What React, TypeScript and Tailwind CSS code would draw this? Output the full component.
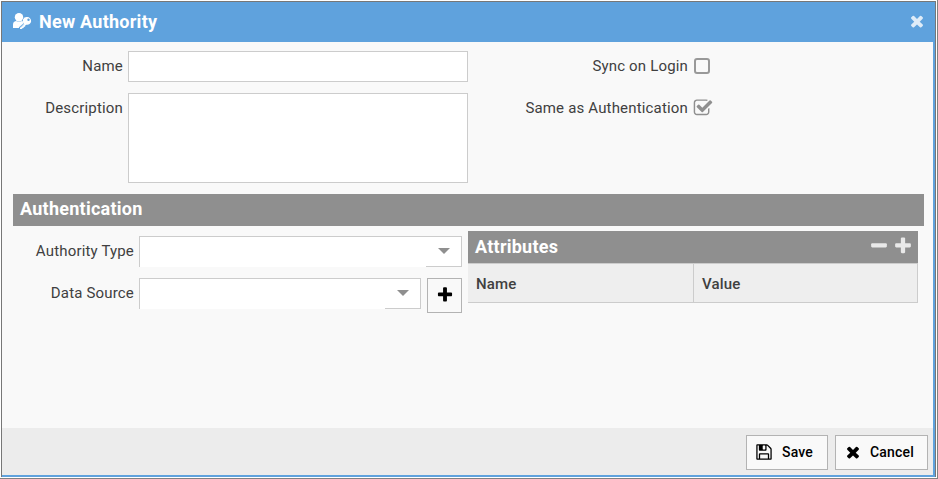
import React from "react";

const paths = {
  times: "M1490 1322q0 40-28 68l-136 136q-28 28-68 28t-68-28l-294-294-294 294q-28 28-68 28t-68-28l-136-136q-28-28-28-68t28-68l294-294-294-294q-28-28-28-68t28-68l136-136q28-28 68-28t68 28l294 294 294-294q28-28 68-28t68 28l136 136q28 28 28 68t-28 68l-294 294 294 294q28 28 28 68z",
  plus: "M1600 736v192q0 40-28 68t-68 28h-416v416q0 40-28 68t-68 28h-192q-40 0-68-28t-28-68v-416h-416q-40 0-68-28t-28-68v-192q0-40 28-68t68-28h416v-416q0-40 28-68t68-28h192q40 0 68 28t28 68v416h416q40 0 68 28t28 68z",
  minus: "M1600 736v192q0 40-28 68t-68 28h-1216q-40 0-68-28t-28-68v-192q0-40 28-68t68-28h1216q40 0 68 28t28 68z",
  save: "M512 1536h768v-384h-768v384zm896 0h128v-896q0-14-10-38.5t-20-34.5l-281-281q-10-10-34-20t-39-10v416q0 40-28 68t-68 28h-576q-40 0-68-28t-28-68v-416h-128v1280h128v-416q0-40 28-68t68-28h832q40 0 68 28t28 68v416zm-384-928v-320q0-13-9.5-22.5t-22.5-9.5h-192q-13 0-22.5 9.5t-9.5 22.5v320q0 13 9.5 22.5t22.5 9.5h192q13 0 22.5-9.5t9.5-22.5zm640 32v928q0 40-28 68t-68 28h-1344q-40 0-68-28t-28-68v-1344q0-40 28-68t68-28h928q40 0 88 20t76 48l280 280q28 28 48 76t20 88z",
  check: "M1472 930v318q0 119-84.5 203.5t-203.5 84.5h-832q-119 0-203.5-84.5t-84.5-203.5v-832q0-119 84.5-203.5t203.5-84.5h832q63 0 117 25 15 7 18 23 3 17-9 29l-49 49q-10 10-23 10-3 0-9-2-23-6-45-6h-832q-66 0-113 47t-47 113v832q0 66 47 113t113 47h832q66 0 113-47t47-113v-254q0-13 9-22l64-64q10-10 23-10 6 0 12 3 20 8 20 29zm231-489l-814 814q-24 24-57 24t-57-24l-430-430q-24-24-24-57t24-57l110-110q24-24 57-24t57 24l263 263 647-647q24-24 57-24t57 24l110 110q24 24 24 57t-24 57z",
};

function Icon({ name, className }: { name: keyof typeof paths; className: string }) {
  return (
    <svg viewBox="0 0 1792 1792" fill="currentColor" className={className}>
      <path d={paths[name]} />
    </svg>
  );
}

function UserKey() {
  return (
    <svg viewBox="0 0 20 18" className="mb-px h-[18px] w-5 shrink-0" fill="#fff">
      <circle cx="7" cy="5.2" r="4.2" />
      <path d="M1 16v-3.2c0-2.4 1.2-3.5 3-3.8 1.8 1.1 4.2 1.1 6 0l.9.6c0 .7 0 1.4.3 2L7.3 15l-.5 1z" />
      <path
        fillRule="evenodd"
        d="M15 5a3.9 3.9 0 1 1-.6 7.7l-1.2.9-.1 1.1-1.3.1-.2 1.3-1.3.1-.6.8H8v-1.6l3.8-3.8A3.9 3.9 0 0 1 15 5zm1.5 1.5a1.2 1.2 0 1 0 0 2.4 1.2 1.2 0 0 0 0-2.4z"
      />
      <path d="M12 12.2l-3.4 3.4" stroke="#5fa2dd" strokeWidth=".6" />
    </svg>
  );
}

function Label({ children, className }: { children: string; className: string }) {
  return <label className={"shrink-0 text-right leading-[30px] " + className}>{children}</label>;
}

function Combo({ className }: { className: string }) {
  return (
    <div className={"flex h-[31px] shrink-0 " + className}>
      <div className="grow border-t border-l border-[#ccc] bg-white" />
      <div className="flex w-9 items-center justify-center border-t border-r border-b border-[#ccc] bg-white">
        <svg viewBox="0 0 12 6" className="mb-px h-1.5 w-3" fill="#8f8f8f">
          <path d="M0 0h12L6 6z" />
        </svg>
      </div>
    </div>
  );
}

export default function App() {
  return (
    <div className="h-[479px] w-[938px] border-r border-b border-[#828282] bg-white p-px font-[Roboto,sans-serif] text-[15px] tracking-[0.17px] text-[#404040]">
      <div className="flex h-[476px] w-[935px] flex-col border-t border-r border-l border-[#777] bg-[#5fa2dd]">
        <header className="flex h-10 shrink-0 items-center pr-[9px] pb-px pl-[10px] text-white">
          <UserKey />
          <h1 className="ml-[7px] grow text-[18px] leading-7 font-bold tracking-[0.25px]">New Authority</h1>
          <Icon name="times" className="mb-px h-[18px] w-[18px] opacity-80" />
        </header>
        <div className="mr-[2px] mb-[2px] flex grow flex-col bg-[#f9f9f9]">
          <main className="grow pl-[11px]">
            <div className="flex pt-[9px]">
              <div className="w-[455px]">
                <div className="flex">
                  <Label className="w-[110px]">Name</Label>
                  <div className="ml-[5px] h-[31px] w-[340px] border border-[#ccc] bg-white" />
                </div>
                <div className="mt-[11px] flex">
                  <Label className="w-[110px]">Description</Label>
                  <div className="ml-[5px] h-[90px] w-[340px] border border-[#ccc] bg-white" />
                </div>
              </div>
              <div>
                <div className="flex h-[30px] items-center">
                  <Label className="w-[220px]">Sync on Login</Label>
                  <div className="ml-[6px] h-4 w-4 rounded-[3px] border-2 border-[#999]" />
                </div>
                <div className="mt-3 flex h-[30px] items-center">
                  <Label className="w-[220px]">Same as Authentication</Label>
                  <Icon name="check" className="ml-[5px] h-[20px] w-[20px] text-[#8f8f8f]" />
                </div>
              </div>
            </div>
            <h2 className="mt-[11px] h-8 w-[911px] bg-[#8f8f8f] pl-[7px] text-[18px] leading-[30px] font-bold tracking-[0.25px] text-white">Authentication</h2>
            <div className="flex pt-[5px]">
              <div className="w-[455px] pt-[5px]">
                <div className="flex h-[35px]">
                  <Label className="w-[121px]">Authority Type</Label>
                  <Combo className="ml-[5px] w-[323px]" />
                </div>
                <div className="mt-[7px] flex">
                  <Label className="w-[121px]">Data Source</Label>
                  <Combo className="ml-[5px] w-[282px]" />
                  <button className="ml-[6px] flex h-[35px] w-[35px] items-center justify-center border border-[#b3b3b3] bg-[#f9f9f9] pb-px text-black">
                    <Icon name="plus" className="h-[18px] w-[18px]" />
                  </button>
                </div>
              </div>
              <section className="h-[72px] w-[450px]">
                <div className="flex h-8 items-center bg-[#8f8f8f] pr-[5px] pl-[7px] text-[#e9e9e9]">
                  <h3 className="grow text-[18px] leading-[30px] font-bold tracking-[0.25px] text-white">Attributes</h3>
                  <Icon name="minus" className="mb-[3px] h-[20px] w-[20px]" />
                  <Icon name="plus" className="mb-[3px] ml-[4px] h-[20px] w-[20px]" />
                </div>
                <div className="flex h-10 border-t border-r border-b border-[#ccc] bg-[#eee] leading-[40px] font-medium">
                  <div className="w-[226px] border-r border-[#ccc] pl-2">Name</div>
                  <div className="pl-2">Value</div>
                </div>
              </section>
            </div>
          </main>
          <footer className="flex h-[47px] shrink-0 justify-end gap-[7px] bg-[#ececec] pt-[7px] pr-[5px] text-[14px] font-medium text-black">
            <button className="flex h-[35px] w-[82px] items-center border border-[#b3b3b3] bg-[#f9f9f9] pl-[8px]">
              <Icon name="save" className="mb-px h-[18px] w-[18px]" />
              <span className="ml-[9px]">Save</span>
            </button>
            <button className="flex h-[35px] w-[93px] items-center border border-[#b3b3b3] bg-[#f9f9f9] pl-[8px]">
              <Icon name="times" className="mb-px h-[18px] w-[18px]" />
              <span className="ml-[8px]">Cancel</span>
            </button>
          </footer>
        </div>
      </div>
    </div>
  );
}
